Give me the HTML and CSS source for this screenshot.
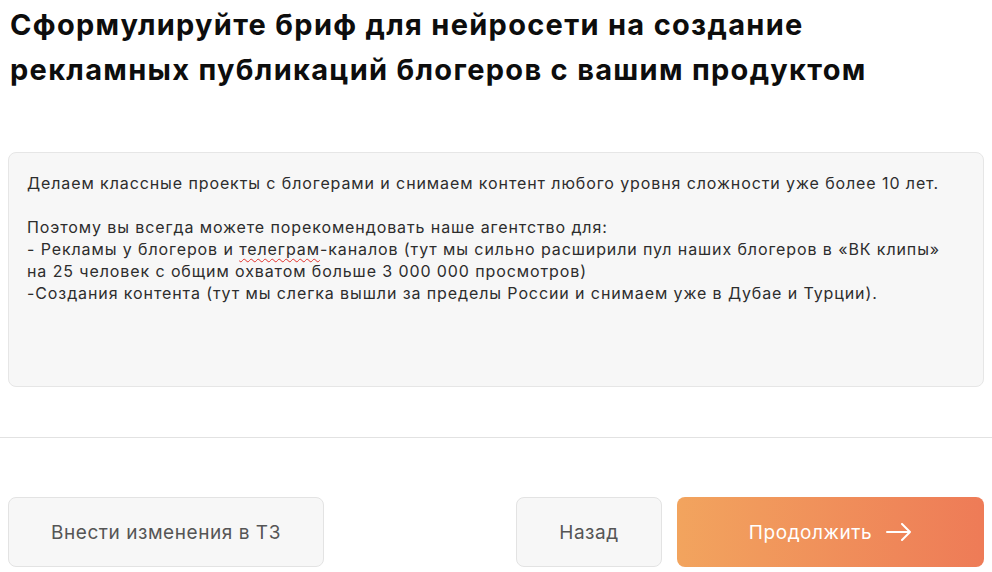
FILE: index.html
```html
<!DOCTYPE html>
<html lang="ru">
<head>
<meta charset="utf-8">
<link rel="stylesheet" href="styles.css">
</head>
<body>
<div class="page">
  <h1 class="title">Сформулируйте бриф для нейросети на создание рекламных публикаций блогеров с вашим продуктом</h1>
  <div class="brief">
    <p>Делаем классные проекты с блогерами и снимаем контент любого уровня сложности уже более 10 лет.</p>
    <p>Поэтому вы всегда можете порекомендовать наше агентство для:<br>- Рекламы у блогеров и <span class="typo">телеграм</span>-каналов (тут мы сильно расширили пул наших блогеров в «ВК клипы» на 25 человек с общим охватом больше 3 000 000 просмотров)<br>-Создания контента (тут мы слегка вышли за пределы России и снимаем уже в Дубае и Турции).</p>
  </div>
  <hr class="divider">
  <div class="actions">
    <button class="btn btn-light btn-edit">Внести изменения в ТЗ</button>
    <div class="right">
      <button class="btn btn-light btn-back">Назад</button>
      <button class="btn btn-primary">Продолжить
        <svg width="26" height="18" viewBox="0 0 26 18" fill="none" stroke="#fff" stroke-width="2" stroke-linecap="round" stroke-linejoin="round"><path d="M1 9h23M16 1l8 8-8 8"/></svg>
      </button>
    </div>
  </div>
</div>
</body>
</html>
```
FILE: styles.css
```css
* { box-sizing: border-box; }
html, body { margin: 0; background: #fff; }
body { padding: 0 8px; font-family: Inter, "Noto Sans", sans-serif; color: #111; overflow: hidden; }
.page { display: flex; flex-direction: column; }
.title {
  margin: 0;
  padding: 2px 0 0 2px;
  font-size: 29px;
  line-height: 45px;
  font-weight: 700;
  letter-spacing: 1.3px;
  color: #0d0d0d;
  max-width: 900px;
}
.brief {
  margin-top: 60px;
  height: 235px;
  background: #f7f7f7;
  border: 1px solid #e6e6e6;
  border-radius: 8px;
  padding: 19px 18px;
  font-size: 16px;
  line-height: 22px;
  letter-spacing: 0.9px;
  color: #2d2d2d;
}
.brief p { margin: 0 0 22px; }
.typo { text-decoration: underline wavy #e0302a; text-decoration-thickness: 1px; text-underline-offset: 3px; }
.divider {
  margin: 50px -8px 0;
  border: 0;
  border-top: 1px solid #e2e2e2;
  height: 0;
}
.actions {
  margin-top: 59px;
  display: flex;
  justify-content: space-between;
}
.right { display: flex; gap: 15px; }
.btn {
  height: 70px;
  border-radius: 8px;
  font-family: Inter, "Noto Sans", sans-serif;
  font-size: 19px;
  letter-spacing: 0.55px;
  display: flex;
  align-items: center;
  justify-content: center;
  cursor: pointer;
}
.btn-light {
  background: #f7f7f7;
  border: 1px solid #e3e3e3;
  color: #555;
}
.btn-edit { width: 316px; }
.btn-back { width: 146px; }
.btn-primary {
  width: 307px;
  border: 0;
  color: #fff;
  background: linear-gradient(90deg, #f2a45e 0%, #ee7b57 100%);
  gap: 14px;
}
```
